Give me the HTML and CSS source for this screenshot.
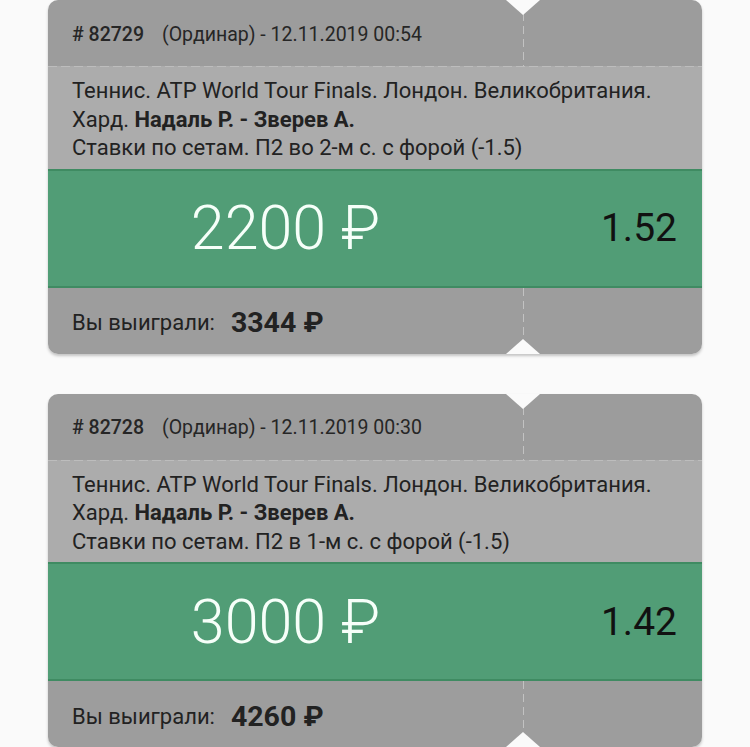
FILE: index.html
```html
<!DOCTYPE html>
<html lang="ru">
<head>
<meta charset="utf-8">
<link rel="stylesheet" href="styles.css">
</head>
<body>
<div class="list">
  <div class="card">
    <div class="head">
      <div class="head-main"><span class="num"># 82729</span><span class="meta">(Ординар) - 12.11.2019 00:54</span></div>
      <div class="head-side"></div>
    </div>
    <div class="desc">
      <div>Теннис. ATP World Tour Finals. Лондон. Великобритания.</div>
      <div>Хард. <b>Надаль Р. - Зверев А.</b></div>
      <div>Ставки по сетам. П2 во 2-м с. с форой (-1.5)</div>
    </div>
    <div class="stake">
      <div class="amount">2200 ₽</div>
      <div class="odds">1.52</div>
    </div>
    <div class="foot">
      <div class="foot-main"><span class="won-label">Вы выиграли:</span><span class="won">3344 ₽</span></div>
      <div class="foot-side"></div>
    </div>
  </div>
  <div class="card">
    <div class="head">
      <div class="head-main"><span class="num"># 82728</span><span class="meta">(Ординар) - 12.11.2019 00:30</span></div>
      <div class="head-side"></div>
    </div>
    <div class="desc">
      <div>Теннис. ATP World Tour Finals. Лондон. Великобритания.</div>
      <div>Хард. <b>Надаль Р. - Зверев А.</b></div>
      <div>Ставки по сетам. П2 в 1-м с. с форой (-1.5)</div>
    </div>
    <div class="stake">
      <div class="amount">3000 ₽</div>
      <div class="odds">1.42</div>
    </div>
    <div class="foot">
      <div class="foot-main"><span class="won-label">Вы выиграли:</span><span class="won">4260 ₽</span></div>
      <div class="foot-side"></div>
    </div>
  </div>
</div>
</body>
</html>
```

FILE: styles.css
```css
html, body {
  margin: 0;
  padding: 0;
  background: #fafafa;
}
body {
  font-family: Roboto, "Noto Sans", "DejaVu Sans", sans-serif;
  color: #222;
  overflow: hidden;
  height: 747px;
}
.list {
  display: flex;
  flex-direction: column;
  gap: 40px;
  padding: 0 48px;
}
.card {
  position: relative;
  width: 654px;
  border-radius: 10px;
  overflow: hidden;
  box-shadow: 0 2px 3px rgba(0, 0, 0, 0.22);
}
.card::before,
.card::after {
  content: "";
  position: absolute;
  left: 458px;
  width: 0;
  height: 0;
  border-left: 17px solid transparent;
  border-right: 17px solid transparent;
  z-index: 2;
}
.card::before {
  top: 0;
  border-top: 15px solid #fafafa;
}
.card::after {
  bottom: 0;
  border-bottom: 15px solid #fafafa;
}
.head {
  display: grid;
  grid-template-columns: 475px 1fr;
  height: 66px;
  background: #9c9c9c;
}
.head-main {
  display: flex;
  align-items: center;
  padding: 2px 0 0 24px;
  font-size: 19.5px;
  color: #262626;
  white-space: nowrap;
}
.num {
  font-weight: 500;
  margin-right: 18px;
}
.head-side,
.foot-side {
  background-image: repeating-linear-gradient(to bottom, #c2c2c2 0 8px, transparent 8px 13px);
  background-size: 1px 100%;
  background-repeat: no-repeat;
}
.desc {
  background: #acacac;
  background-image: repeating-linear-gradient(to right, #bdbdbd 0 9px, transparent 9px 13px);
  background-size: 100% 1px;
  background-repeat: no-repeat;
  padding: 11px 24px 6px;
  font-size: 22px;
  line-height: 28.5px;
  color: #222;
  white-space: nowrap;
}
.desc b {
  font-weight: 700;
}
.stake {
  display: grid;
  grid-template-columns: 475px 1fr;
  align-items: center;
  height: 115px;
  background: #519d76;
  border-top: 2px solid #3f8b62;
  border-bottom: 2px solid #3f8b62;
}
.amount {
  text-align: center;
  font-size: 61px;
  font-weight: 300;
  color: #f6fff9;
}
.odds {
  text-align: right;
  padding-right: 25px;
  font-size: 39px;
  color: #111;
}
.foot {
  display: grid;
  grid-template-columns: 475px 1fr;
  height: 66px;
  background: #9d9d9d;
}
.foot-main {
  display: flex;
  align-items: center;
  padding: 4px 0 0 24px;
}
.won-label {
  font-size: 22px;
  color: #222;
  margin-right: 16px;
}
.won {
  font-size: 28.5px;
  font-weight: 700;
  color: #222;
}
```
